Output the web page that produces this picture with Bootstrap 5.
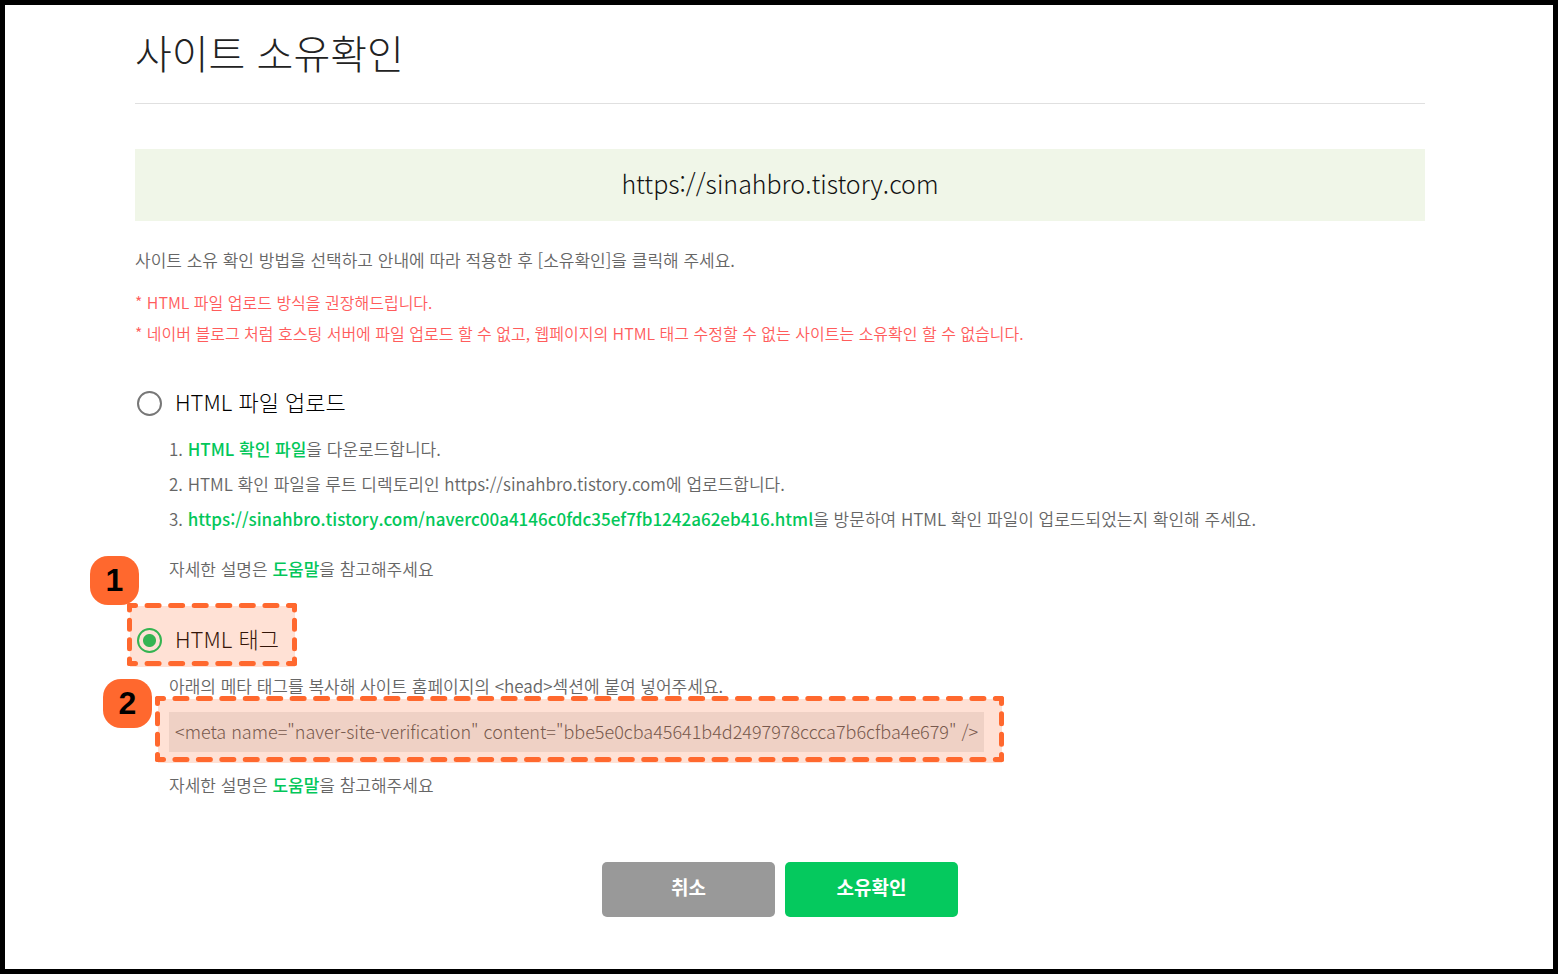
<!DOCTYPE html>
<html lang="ko">
<head>
<meta charset="utf-8">
<meta name="viewport" content="width=device-width, initial-scale=1">
<title>사이트 소유확인</title>
<link href="https://cdn.jsdelivr.net/npm/bootstrap@5.3.0/dist/css/bootstrap.min.css" rel="stylesheet">
<style>
  body { font-family: "Noto Sans CJK KR", sans-serif; font-weight: 350; color: #666; font-size: 17px; line-height: 35px; background: #fff; }
  .frame { border: 5px solid #000; min-height: 100vh; padding: 17px 24px 52px 26px; }
  .page { max-width: 1290px; }
  .page-title { font-size: 40px; line-height: 60px; font-weight: 300; color: #222; border-bottom: 1px solid #e0e0e0; padding-bottom: 21px; margin-bottom: 45px; }
  .site-url { background: #f0f6e8; color: #111; font-size: 25px; font-weight: 300; line-height: 68px; padding-bottom: 4px; margin-bottom: 26px; }
  .intro { line-height: 26px; margin-bottom: 14px; }
  .notes { color: #ff5c5c; font-size: 16px; line-height: 31px; margin-bottom: 36px; }
  .option { gap: 13px; padding-left: 2px; margin-bottom: 10px; line-height: 36px; }
  .option label { font-size: 22px; font-weight: 300; color: #000; padding-bottom: 3px; line-height: 33px; }
  .option .form-check-input { width: 25px; height: 25px; margin: 0; border: 2px solid #777; background: #fff; }
  .option .form-check-input:checked { border-color: #03c75a; background: radial-gradient(circle, #03c75a 6px, #fff 7px); }
  .detail { padding-left: 34px; }
  .detail a { color: #03c75a; text-decoration: none; font-weight: 500; }
  .help { margin: 15px 0 36px; }
  .meta-wrap { margin-top: 9px; }
  .meta-tag { background: #ececec; color: #555; font-size: 18px; font-weight: 300; line-height: 38px; padding: 0 6px 2px; min-width: 810px; }
  .actions { gap: 10px; }
  .action { width: 173px; height: 55px; border-radius: 5px; font-size: 19px; font-weight: 700; color: #fff; border: 0; padding: 0 0 4px; }
  .action-cancel, .action-cancel:hover { background: #999; color: #fff; }
  .action-confirm, .action-confirm:hover { background: #05c95e; color: #fff; }
  .marked { position: relative; }
  .outline { position: absolute; pointer-events: none; overflow: visible; }
  .outline line { stroke: #ff682e; stroke-width: 5; stroke-linecap: round; }
  .outline rect { fill: #ff682e; fill-opacity: .2; }
  .outline-option { left: -8px; top: -19px; }
  .outline-tag { left: -14px; top: -16px; }
  .step { position: absolute; width: 49px; height: 49px; border-radius: 18px; background: #ff682e; color: #000; font: 700 32px/49px "Liberation Sans", sans-serif; text-align: center; }
  .step-one { left: -45px; top: -66px; }
  .step-two { left: -66px; top: -33px; }
</style>
</head>
<body>
<div class="frame">
  <main class="page mx-auto">
    <h1 class="page-title">사이트 소유확인</h1>
    <div class="site-url text-center">https://sinahbro.tistory.com</div>
    <p class="intro">사이트 소유 확인 방법을 선택하고 안내에 따라 적용한 후 [소유확인]을 클릭해 주세요.</p>
    <div class="notes">
      <div>* HTML 파일 업로드 방식을 권장해드립니다.</div>
      <div>* 네이버 블로그 처럼 호스팅 서버에 파일 업로드 할 수 없고, 웹페이지의 HTML 태그 수정할 수 없는 사이트는 소유확인 할 수 없습니다.</div>
    </div>
    <form>
      <div class="option d-flex align-items-center">
        <input class="form-check-input" type="radio" name="method" id="by-file">
        <label for="by-file">HTML 파일 업로드</label>
      </div>
      <div class="detail">
        <div>1. <a href="#file">HTML 확인 파일</a>을 다운로드합니다.</div>
        <div>2. HTML 확인 파일을 루트 디렉토리인 https://sinahbro.tistory.com에 업로드합니다.</div>
        <div>3. <a href="#uploaded">https://sinahbro.tistory.com/naverc00a4146c0fdc35ef7fb1242a62eb416.html</a>을 방문하여 HTML 확인 파일이 업로드되었는지 확인해 주세요.</div>
        <p class="help">자세한 설명은 <a href="#help">도움말</a>을 참고해주세요</p>
      </div>
      <div class="option marked d-flex align-items-center">
        <input class="form-check-input" type="radio" name="method" id="by-tag" checked>
        <label for="by-tag">HTML 태그</label>
        <svg class="outline outline-option" width="170" height="64" aria-hidden="true">
          <rect x="3" y="3" width="165" height="61"/>
          <g stroke-dasharray="12 11.57" stroke-dashoffset="6">
            <line x1="2.5" y1="2.5" x2="167.5" y2="2.5"/>
            <line x1="2.5" y1="60.5" x2="167.5" y2="60.5"/>
          </g>
          <g stroke-dasharray="9 10.33" stroke-dashoffset="4.5">
            <line x1="2.5" y1="2.5" x2="2.5" y2="60.5"/>
            <line x1="167.5" y1="2.5" x2="167.5" y2="60.5"/>
          </g>
        </svg>
        <span class="step step-one">1</span>
      </div>
      <div class="detail">
        <div>아래의 메타 태그를 복사해 사이트 홈페이지의 &lt;head&gt;섹션에 붙여 넣어주세요.</div>
        <div class="meta-wrap marked d-table">
          <div class="meta-tag">&lt;meta name="naver-site-verification" content="bbe5e0cba45641b4d2497978ccca7b6cfba4e679" /&gt;</div>
          <svg class="outline outline-tag" width="849" height="67" aria-hidden="true">
            <rect x="3" y="3" width="844" height="64"/>
            <g stroke-dasharray="12 11.44" stroke-dashoffset="6">
              <line x1="2.5" y1="2.5" x2="846.5" y2="2.5"/>
              <line x1="2.5" y1="63.5" x2="846.5" y2="63.5"/>
            </g>
            <g stroke-dasharray="10 10.33" stroke-dashoffset="5">
              <line x1="2.5" y1="2.5" x2="2.5" y2="63.5"/>
              <line x1="846.5" y1="2.5" x2="846.5" y2="63.5"/>
            </g>
          </svg>
          <span class="step step-two">2</span>
        </div>
        <p class="help">자세한 설명은 <a href="#help">도움말</a>을 참고해주세요</p>
      </div>
      <div class="actions d-flex justify-content-center pt-4">
        <button type="button" class="btn action action-cancel">취소</button>
        <button type="submit" class="btn action action-confirm">소유확인</button>
      </div>
    </form>
  </main>
</div>
<script src="https://cdn.jsdelivr.net/npm/bootstrap@5.3.0/dist/js/bootstrap.bundle.min.js"></script>
</body>
</html>
